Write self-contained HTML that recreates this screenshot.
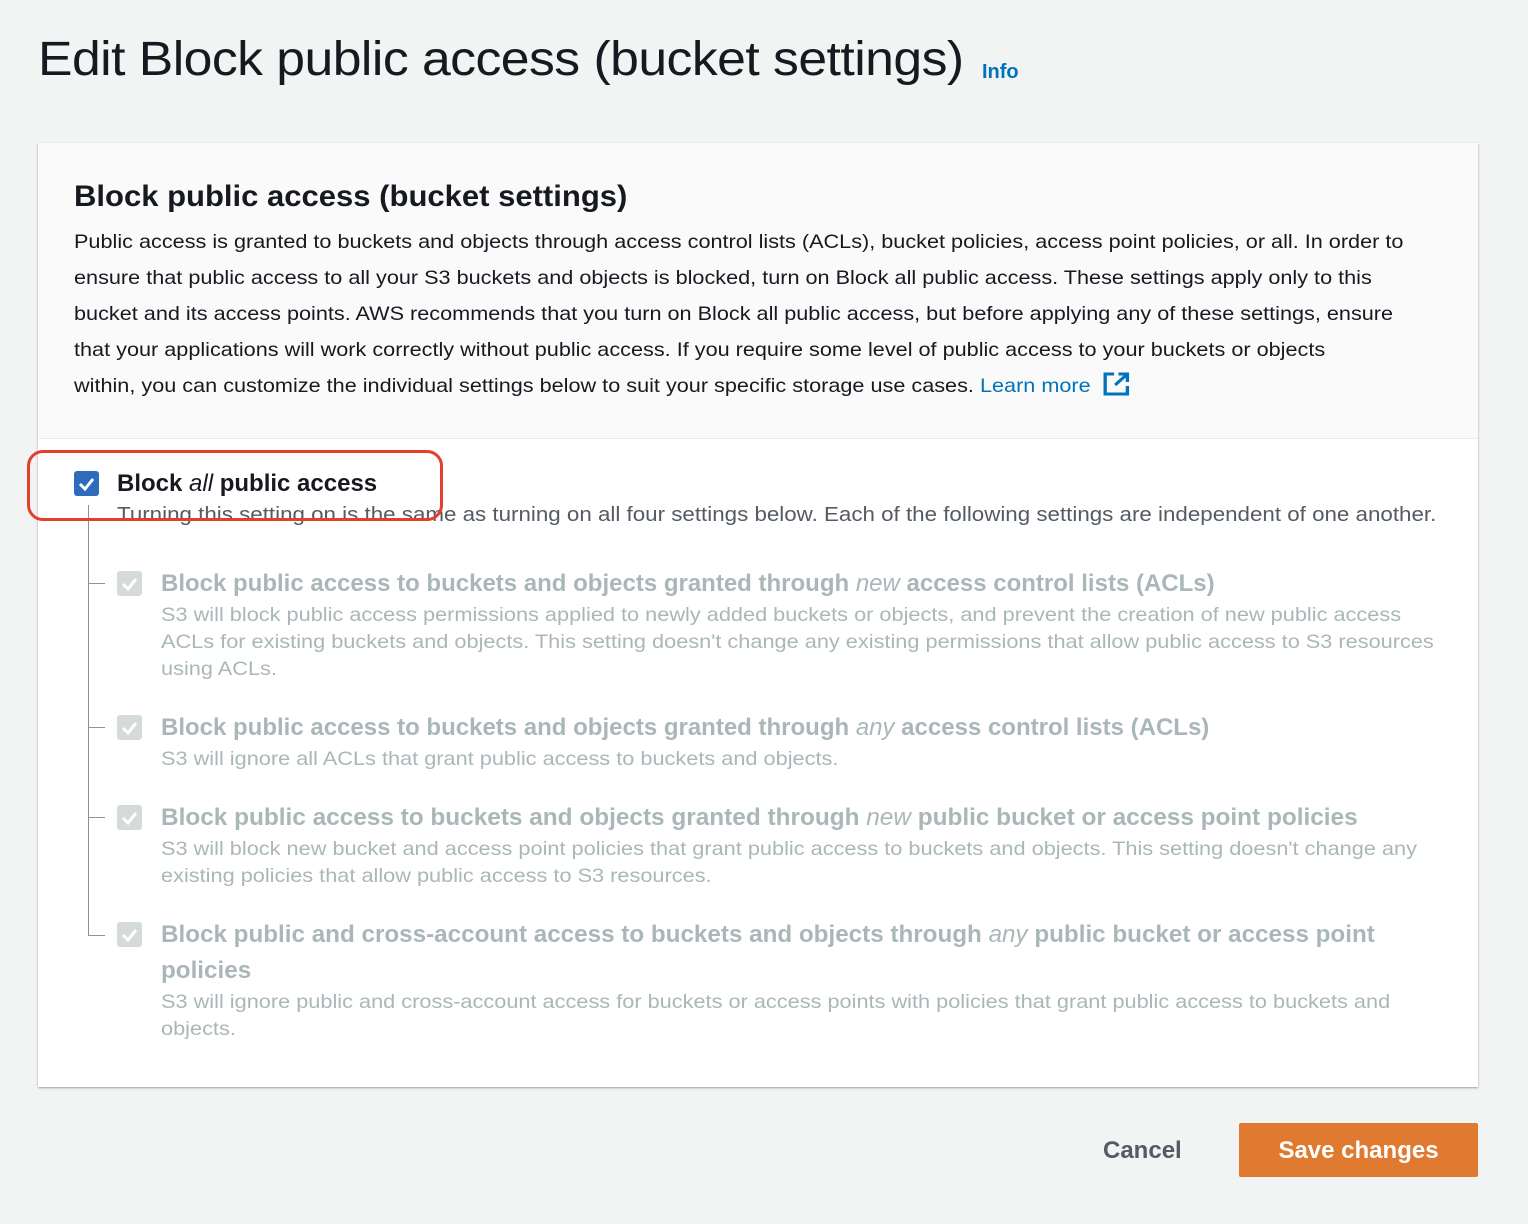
<!DOCTYPE html>
<html><head><style>
body{margin:0;background:#f2f3f3;font-family:"Liberation Sans",sans-serif;width:1528px;height:1224px;position:relative;overflow:hidden;color:#16191f}
.a{position:absolute;white-space:nowrap;transform-origin:0 0}
h1{position:absolute;left:38px;top:32px;margin:0;font-size:48px;font-weight:normal;letter-spacing:-0.5px;white-space:nowrap;transform:scaleX(1.077);transform-origin:0 0}
.panel{position:absolute;left:38px;top:143px;width:1440px;height:944px;background:#fff;box-shadow:0 1px 2px rgba(0,0,0,.35)}
.hd{position:absolute;left:0;top:0;width:1440px;height:295px;background:#fafafa;border-bottom:1px solid #eaeded}
.p{font-size:19.5px;line-height:36px}
.cb{position:absolute;width:25px;height:25px;border-radius:3px}
.t{font-size:24px;font-weight:bold;color:#aab7b8}
.d{font-size:19.5px;line-height:27px;color:#aab7b8;transform:scaleX(1.114)}
.l{position:absolute;background:#879596}
</style></head><body>
<h1>Edit Block public access (bucket settings)</h1>
<div class="a" style="left:982px;top:61px;font-size:20px;font-weight:bold;color:#0073bb">Info</div>
<div class="panel">
<div class="hd"></div>
<div class="a" style="left:36px;top:37px;font-size:30px;font-weight:bold;transform:scaleX(1.034)">Block public access (bucket settings)</div>
<div class="a p" style="left:36px;top:81px;color:#16191f;transform:scaleX(1.11)">Public access is granted to buckets and objects through access control lists (ACLs), bucket policies, access point policies, or all. In order to<br>ensure that public access to all your S3 buckets and objects is blocked, turn on Block all public access. These settings apply only to this<br>bucket and its access points. AWS recommends that you turn on Block all public access, but before applying any of these settings, ensure<br>that your applications will work correctly without public access. If you require some level of public access to your buckets or objects<br>within, you can customize the individual settings below to suit your specific storage use cases. <span style="color:#0073bb">Learn more&nbsp; <svg width="24" height="26" viewBox="0 0 24 26" style="vertical-align:-5px"><path d="M10 3H2v20h20v-8" fill="none" stroke="#0073bb" stroke-width="3"/><path d="M14 3h8v8M22 3L11 14" fill="none" stroke="#0073bb" stroke-width="3"/></svg></span></div>
</div>
<div class="l" style="left:88px;top:505px;width:1px;height:431px"></div>
<div class="l" style="left:88px;top:583px;width:17px;height:1px"></div>
<div class="l" style="left:88px;top:727px;width:17px;height:1px"></div>
<div class="l" style="left:88px;top:817px;width:17px;height:1px"></div>
<div class="l" style="left:88px;top:935px;width:17px;height:1px"></div>
<div class="cb" style="left:74px;top:471px;background:#2e6bbd"><svg width="25" height="25"><path d="M6 13l5 5 8-10" stroke="#fff" stroke-width="3" fill="none"/></svg></div>
<div class="a" style="left:117px;top:470px;font-size:24px;font-weight:bold">Block <i style="font-weight:normal">all</i> public access</div>
<div class="a" style="left:117px;top:504px;font-size:20px;color:#545b64;transform:scaleX(1.117)">Turning this setting on is the same as turning on all four settings below. Each of the following settings are independent of one another.</div>
<div style="position:absolute;left:27px;top:450px;width:410px;height:65px;border:3px solid #e3402c;border-radius:16px"></div>

<div class="cb" style="left:117px;top:571px;background:#d5dbdb"><svg width="25" height="25"><path d="M6 13l5 5 8-10" stroke="#fff" stroke-width="3" fill="none"/></svg></div>
<div class="a t" style="left:161px;top:570px">Block public access to buckets and objects granted through <i style="font-weight:normal">new</i> access control lists (ACLs)</div>
<div class="a d" style="left:161px;top:602px">S3 will block public access permissions applied to newly added buckets or objects, and prevent the creation of new public access<br>ACLs for existing buckets and objects. This setting doesn't change any existing permissions that allow public access to S3 resources<br>using ACLs.</div>

<div class="cb" style="left:117px;top:715px;background:#d5dbdb"><svg width="25" height="25"><path d="M6 13l5 5 8-10" stroke="#fff" stroke-width="3" fill="none"/></svg></div>
<div class="a t" style="left:161px;top:714px">Block public access to buckets and objects granted through <i style="font-weight:normal">any</i> access control lists (ACLs)</div>
<div class="a d" style="left:161px;top:746px">S3 will ignore all ACLs that grant public access to buckets and objects.</div>

<div class="cb" style="left:117px;top:805px;background:#d5dbdb"><svg width="25" height="25"><path d="M6 13l5 5 8-10" stroke="#fff" stroke-width="3" fill="none"/></svg></div>
<div class="a t" style="left:161px;top:804px;transform:scaleX(1.015)">Block public access to buckets and objects granted through <i style="font-weight:normal">new</i> public bucket or access point policies</div>
<div class="a d" style="left:161px;top:836px">S3 will block new bucket and access point policies that grant public access to buckets and objects. This setting doesn't change any<br>existing policies that allow public access to S3 resources.</div>

<div class="cb" style="left:117px;top:922px;background:#d5dbdb"><svg width="25" height="25"><path d="M6 13l5 5 8-10" stroke="#fff" stroke-width="3" fill="none"/></svg></div>
<div class="a t" style="left:161px;top:917px;line-height:36px;transform:scaleX(1.009)">Block public and cross-account access to buckets and objects through <i style="font-weight:normal">any</i> public bucket or access point<br>policies</div>
<div class="a d" style="left:161px;top:989px">S3 will ignore public and cross-account access for buckets or access points with policies that grant public access to buckets and<br>objects.</div>

<div class="a" style="left:1103px;top:1137px;font-size:24px;font-weight:bold;color:#545b64">Cancel</div>
<div style="position:absolute;left:1239px;top:1123px;width:239px;height:54px;background:#df7a30;border-radius:2px;color:#fff;font-size:24px;font-weight:bold;text-align:center;line-height:56px">Save changes</div>
</body></html>
